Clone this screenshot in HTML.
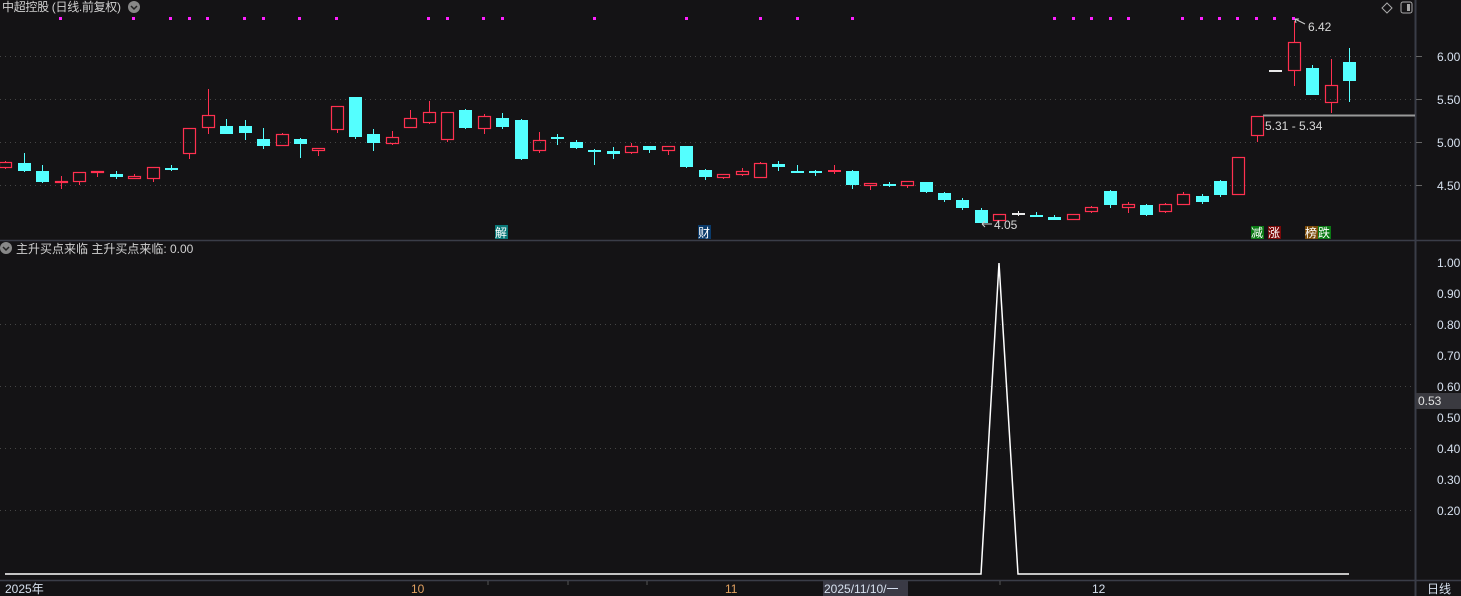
<!DOCTYPE html>
<html><head><meta charset="utf-8"><style>
html,body{margin:0;padding:0;background:#141315;width:1461px;height:596px;overflow:hidden;font-family:"Liberation Sans","Noto Sans CJK SC",sans-serif;}
svg{position:absolute;left:0;top:0}
text{font-family:"Liberation Sans","Noto Sans CJK SC",sans-serif;}
</style></head><body>
<svg id="s" width="1461" height="596" xmlns="http://www.w3.org/2000/svg">
<rect width="1461" height="596" fill="#141315"/>
<g stroke="#454545" stroke-dasharray="1,4" stroke-width="1">
<line x1="0" y1="56.5" x2="1413" y2="56.5"/><line x1="0" y1="99.5" x2="1413" y2="99.5"/>
<line x1="0" y1="142.5" x2="1413" y2="142.5"/><line x1="0" y1="185.5" x2="1413" y2="185.5"/>
<line x1="0" y1="324.5" x2="1413" y2="324.5"/><line x1="0" y1="386.5" x2="1413" y2="386.5"/>
<line x1="0" y1="448.5" x2="1413" y2="448.5"/><line x1="0" y1="510.5" x2="1413" y2="510.5"/>
</g>
<line x1="1415.5" y1="0" x2="1415.5" y2="596" stroke="#3a3d48" stroke-width="2"/>
<line x1="0" y1="240.5" x2="1461" y2="240.5" stroke="#3a3d48" stroke-width="1.5"/>
<line x1="0" y1="580.5" x2="1461" y2="580.5" stroke="#3a3d48" stroke-width="1.5"/>
<g fill="#d6e0ee" font-size="12">
<text x="1437" y="61">6.00</text><text x="1437" y="104">5.50</text><text x="1437" y="147">5.00</text><text x="1437" y="190">4.50</text>
<text x="1437" y="267">1.00</text><text x="1437" y="298">0.90</text><text x="1437" y="329">0.80</text><text x="1437" y="360">0.70</text><text x="1437" y="391">0.60</text>
<text x="1437" y="422">0.50</text><text x="1437" y="453">0.40</text><text x="1437" y="484">0.30</text><text x="1437" y="515">0.20</text>
</g>
<g stroke="#666" stroke-width="1">
<line x1="1416" y1="56.5" x2="1422" y2="56.5"/><line x1="1416" y1="99.5" x2="1422" y2="99.5"/><line x1="1416" y1="142.5" x2="1422" y2="142.5"/><line x1="1416" y1="185.5" x2="1422" y2="185.5"/>
</g>
<rect x="1416" y="393" width="45" height="16" fill="#3a3a40"/>
<text x="1418" y="405" fill="#e0e0e0" font-size="12">0.53</text>
<text x="2" y="11" fill="#d0d0d0" font-size="12" textLength="119">中超控股 (日线.前复权)</text>
<circle cx="134" cy="7" r="6" fill="#888"/><path d="M131 6l3 3 3-3" stroke="#222" fill="none" stroke-width="1.5"/>
<circle cx="6" cy="248" r="6" fill="#888"/><path d="M3 247l3 3 3-3" stroke="#222" fill="none" stroke-width="1.5"/>
<text x="16" y="253" fill="#d0d0d0" font-size="12">主升买点来临 主升买点来临: 0.00</text>
<path d="M1387 3l5 5-5 5-5-5z" stroke="#aaa" fill="none"/>
<rect x="1401" y="2" width="11" height="11" rx="2" stroke="#aaa" fill="none"/><rect x="1407" y="4" width="3" height="7" fill="#aaa"/>
<g id="dots" fill="#ff20ff"></g>
<g id="c"></g>
<polyline points="5,574 981,574 999,263 1018,574 1349,574" fill="none" stroke="#fff" stroke-width="1.5"/>
<line x1="1263" y1="115.5" x2="1415" y2="115.5" stroke="#999" stroke-width="2"/>
<text x="1265" y="130" fill="#d8d8d8" font-size="12">5.31 - 5.34</text>
<text x="1308" y="31" fill="#d8d8d8" font-size="12">6.42</text>
<path d="M1295 19l10 5M1295 19l4 0M1295 19l1 4" stroke="#ccc" fill="none"/>
<text x="994" y="229" fill="#d8d8d8" font-size="12">4.05</text>
<path d="M982 224l10 0M982 224l3-3M982 224l3 3" stroke="#ccc" fill="none"/>
<g font-size="12">
<rect x="495" y="225" width="13" height="14" fill="#0a7878"/><text x="495" y="237" fill="#fff">解</text>
<rect x="698" y="225" width="13" height="14" fill="#0a3a6a"/><text x="698" y="237" fill="#fff">财</text>
<rect x="1251" y="226" width="13" height="13" fill="#0a7a14"/><text x="1251" y="237" fill="#fff">减</text>
<rect x="1268" y="226" width="13" height="13" fill="#7a0808"/><text x="1268" y="237" fill="#fff">涨</text>
<rect x="1305" y="226" width="13" height="13" fill="#7a4a08"/><text x="1305" y="237" fill="#fff">榜</text>
<rect x="1318" y="226" width="13" height="13" fill="#0a7a14"/><text x="1318" y="237" fill="#fff">跌</text>
</g>
<rect x="823" y="581" width="85" height="15" fill="#3a3a45"/>
<g font-size="12" fill="#d6e0ee">
<text x="5" y="593">2025年</text>
<text x="411" y="593" fill="#e0a060">10</text>
<text x="725" y="593" fill="#e0a060">11</text>
<text x="824" y="593">2025/11/10/一</text>
<text x="1092" y="593">12</text>
<text x="1427" y="593">日线</text>
</g>
<g stroke="#555"><line x1="488" y1="581" x2="488" y2="585"/><line x1="568" y1="581" x2="568" y2="585"/><line x1="647" y1="581" x2="647" y2="585"/><line x1="1000" y1="581" x2="1000" y2="585"/></g>
</svg>
<script>
var d=[[5,'r',162,168,161,169],[24,'c',163,171,153,172],[42,'c',171,182,165,183],[61,'r',181,183,176,189],[79,'r',172,182,172,185],[97,'r',171,173,171,177],[116,'c',174,177,171,179],[134,'r',176,179,174,179],[153,'r',167,179,167,182],[171,'c',168,168,165,171],[189,'r',128,154,128,159],[208,'r',115,128,89,134],[226,'c',126,134,119,134],[245,'c',126,133,120,140],[263,'c',139,146,128,149],[282,'r',134,146,133,146],[300,'c',139,144,138,158],[318,'r',148,151,148,156],[337,'r',106,130,106,133],[355,'c',97,137,97,139],[373,'c',134,143,129,151],[392,'r',137,144,131,145],[410,'r',118,128,110,128],[429,'r',112,123,101,124],[447,'r',112,140,112,142],[465,'c',110,128,109,129],[484,'r',116,129,114,134],[502,'c',118,127,113,129],[521,'c',120,159,119,160],[539,'r',140,151,132,153],[557,'c',137,139,134,145],[576,'c',142,148,140,149],[594,'c',150,150,149,165],[613,'c',151,154,147,159],[631,'r',146,153,143,154],[649,'c',146,150,146,153],[668,'r',146,151,146,155],[686,'c',146,167,146,168],[705,'c',170,177,169,180],[723,'r',174,178,174,179],[742,'r',171,175,168,176],[760,'r',163,178,162,178],[778,'c',164,167,161,171],[797,'c',171,171,165,171],[815,'c',171,171,170,176],[834,'R',170,172,165,174],[852,'c',171,185,170,189],[870,'r',183,186,183,190],[889,'c',184,186,182,187],[907,'r',181,186,181,188],[926,'c',182,192,182,193],[944,'c',193,200,192,202],[962,'c',200,208,198,210],[981,'c',210,223,208,223],[999,'r',214,221,214,221],[1018,'w',213,213,211,216],[1036,'c',215,217,212,217],[1054,'c',217,220,215,220],[1073,'r',214,220,214,220],[1091,'r',207,212,206,213],[1110,'c',191,205,190,208],[1128,'r',204,208,202,213],[1146,'c',205,215,204,216],[1165,'r',204,212,203,213],[1183,'r',194,205,192,205],[1202,'c',196,202,194,204],[1220,'c',181,195,180,197],[1238,'r',157,195,157,195],[1257,'r',116,136,116,142],[1275,'w',70,70,70,70],[1294,'r',42,71,21,86],[1312,'c',68,95,65,95],[1331,'r',85,103,59,113],[1349,'c',62,81,48,102]];
var h='';
d.forEach(function(e){var x=e[0],t=e[1],a=e[2],b=e[3],hi=e[4],lo=e[5];
var col=t=='c'?'#54ffff':(t=='w'?'#e8e8e8':'#ff3050');
if(hi<a)h+='<rect x="'+x+'" y="'+hi+'" width="1" height="'+(a-hi)+'" fill="'+col+'"/>';
if(lo>b)h+='<rect x="'+x+'" y="'+b+'" width="1" height="'+(lo-b)+'" fill="'+col+'"/>';
if(b-a<2){h+='<rect x="'+(x-6)+'" y="'+a+'" width="13" height="2" fill="'+col+'"/>';}
else if(t=='r'){h+='<rect x="'+(x-5.5)+'" y="'+(a+.5)+'" width="12" height="'+(b-a-1)+'" fill="none" stroke="'+col+'" stroke-width="1.2"/>';}
else{h+='<rect x="'+(x-6)+'" y="'+a+'" width="13" height="'+(b-a)+'" fill="'+col+'"/>';}
});
document.getElementById('c').innerHTML=h;
var dx=[60,133,170,189,207,244,263,299,336,428,447,483,502,594,686,760,797,852,1054,1073,1091,1110,1128,1182,1201,1219,1237,1256,1274,1293],g='';
dx.forEach(function(x){g+='<rect x="'+(x-1)+'" y="17" width="3" height="3"/>';});
document.getElementById('dots').innerHTML=g;
</script>
</body></html>
